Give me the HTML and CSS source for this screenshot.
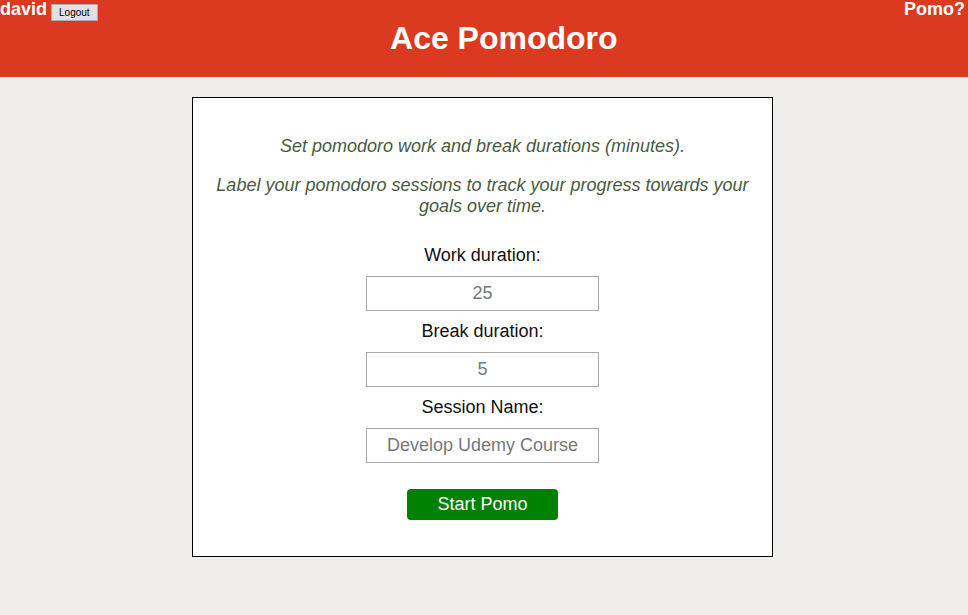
FILE: index.html
```html
<!DOCTYPE html>
<html>
<head>
<meta charset="utf-8">
<link rel="stylesheet" href="styles.css">
</head>
<body>
<header class="topbar">
  <div class="user"><span class="username">david</span><button class="logout">Logout</button></div>
  <h1 class="title">Ace Pomodoro</h1>
  <div class="help">Pomo?</div>
</header>
<main class="main">
  <section class="card">
    <p class="intro">Set pomodoro work and break durations (minutes).</p>
    <p class="intro">Label your pomodoro sessions to track your progress towards your goals over time.</p>
    <form class="form">
      <label class="label">Work duration:</label>
      <input class="field" type="text" placeholder="25">
      <label class="label">Break duration:</label>
      <input class="field" type="text" placeholder="5">
      <label class="label">Session Name:</label>
      <input class="field" type="text" placeholder="Develop Udemy Course">
      <button class="start" type="button">Start Pomo</button>
    </form>
  </section>
</main>
</body>
</html>
```
FILE: styles.css
```css
html, body {
  margin: 0;
  padding: 0;
  background: #eeedec;
  font-family: "Liberation Sans", Arial, sans-serif;
}
.topbar {
  background: #db3a20;
  height: 77px;
  display: flex;
  justify-content: space-between;
  align-items: flex-start;
  color: #fff;
}
.user {
  display: flex;
  align-items: flex-start;
  gap: 4px;
}
.username {
  font-weight: bold;
  font-size: 18px;
  line-height: 21px;
  margin-top: -1px;
}
.logout {
  margin-top: 4px;
  font-family: "Liberation Sans", Arial, sans-serif;
  font-size: 10px;
  height: 17px;
  padding: 0 7px;
  background: #e1e1e1;
  border: 1px solid #adadad;
  border-radius: 0;
  color: #000;
}
.title {
  margin: 20px 0 0 6px;
  font-size: 32px;
  line-height: 37px;
  font-weight: bold;
}
.help {
  font-weight: bold;
  font-size: 18px;
  line-height: 21px;
  margin-top: -1px;
  margin-right: 3px;
}
.main {
  display: flex;
  justify-content: center;
  padding-top: 20px;
  padding-right: 3px;
}
.card {
  width: 579px;
  height: 438px;
  background: #fff;
  border: 1px solid #000;
  text-align: center;
  padding-top: 20px;
  box-sizing: content-box;
}
.intro {
  font-style: italic;
  font-size: 18px;
  line-height: 21px;
  color: #4a5a40;
  margin: 18px 22px;
}
.form {
  display: flex;
  flex-direction: column;
  align-items: center;
  margin-top: 28px;
}
.label {
  font-size: 18px;
  line-height: 21px;
  color: #111;
  margin-bottom: 10px;
}
.field {
  width: 233px;
  height: 35px;
  box-sizing: border-box;
  border: 1px solid #aaa;
  font-family: "Liberation Sans", Arial, sans-serif;
  font-size: 18px;
  text-align: center;
  margin: 0 0 10px 0;
  padding: 0;
}
.field::placeholder {
  color: #777;
}
.start {
  margin-top: 16px;
  width: 151px;
  height: 31px;
  background: #008000;
  color: #fff;
  border: none;
  border-radius: 4px;
  font-family: "Liberation Sans", Arial, sans-serif;
  font-size: 18px;
}
```
